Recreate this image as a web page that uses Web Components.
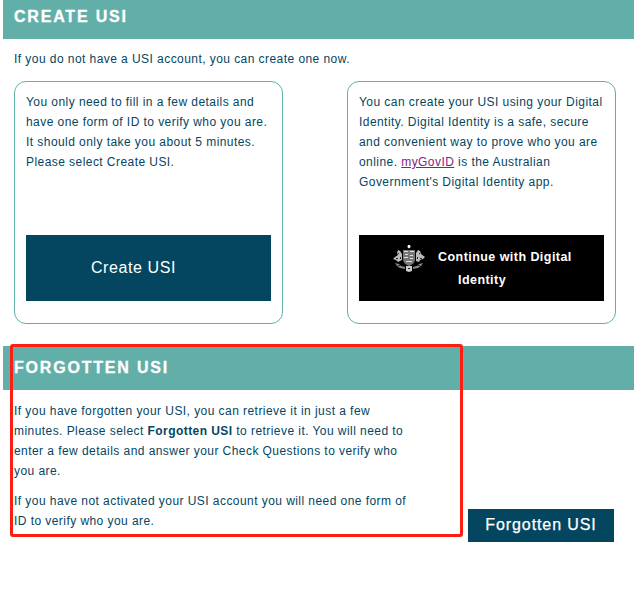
<!DOCTYPE html>
<html>
<head>
<meta charset="utf-8">
<title>USI</title>
<style>
  html, body { margin: 0; background: #fff; }
  body { font: 12px/20px "Liberation Sans", Arial, sans-serif; color: #04465f; letter-spacing: .44px; }
  a { color: #85207f; }
</style>
</head>
<body>
<usi-page>
  <usi-section heading="CREATE USI" bar="39">
    <usi-intro>If you do not have a USI account, you can create one now.</usi-intro>
    <usi-cards>
      <usi-card>
        You only need to fill in a few details and have one form of ID to verify who you are. It should only take you about 5 minutes. Please select Create USI.
        <usi-button slot="action" class="wide">Create USI</usi-button>
      </usi-card>
      <usi-card>
        You can create your USI using your Digital Identity. Digital Identity is a safe, secure and convenient way to prove who you are online. <a href="#">myGovID</a> is the Australian Government's Digital Identity app.
        <usi-digital-button slot="action"></usi-digital-button>
      </usi-card>
    </usi-cards>
  </usi-section>
  <usi-section heading="FORGOTTEN USI" bar="44">
    <usi-forgotten>
      <p>If you have forgotten your USI, you can retrieve it in just a few minutes. Please select <b>Forgotten USI</b> to retrieve it. You will need to enter a few details and answer your Check Questions to verify who you are.</p>
      <p>If you have not activated your USI account you will need one form of ID to verify who you are.</p>
    </usi-forgotten>
  </usi-section>
  <usi-highlight></usi-highlight>
</usi-page>

<script>
function shadow(el, html) {
  el.attachShadow({ mode: "open" }).innerHTML = html;
}

class UsiPage extends HTMLElement {
  constructor() {
    super();
    shadow(this, `
      <style>
        :host { display: block; position: relative; padding-left: 3px; min-height: 589px; box-sizing: border-box; }
      </style>
      <slot></slot>`);
  }
}

class UsiSection extends HTMLElement {
  constructor() {
    super();
    const bar = +this.getAttribute("bar");
    // first bar is cut off by the top of the page, so its text sits higher
    const lh = bar > 40 ? bar : bar - 5;
    shadow(this, `
      <style>
        :host { display: block; }
        h2 {
          margin: 0;
          height: ${bar}px;
          padding-left: 11px;
          background: #62afaa;
          color: #fff;
          font: bold 16px/${lh}px "Liberation Sans", Arial, sans-serif;
          letter-spacing: 1.8px;
          -webkit-text-stroke: .3px #fff;
        }
      </style>
      <h2>${this.getAttribute("heading")}</h2>
      <slot></slot>`);
  }
}

class UsiIntro extends HTMLElement {
  constructor() {
    super();
    shadow(this, `
      <style>
        :host { display: block; padding: 10px 0 12px 11px; }
      </style>
      <slot></slot>`);
  }
}

class UsiCards extends HTMLElement {
  constructor() {
    super();
    shadow(this, `
      <style>
        :host { display: flex; gap: 64px; padding: 0 0 22px 11px; }
      </style>
      <slot></slot>`);
  }
}

class UsiCard extends HTMLElement {
  constructor() {
    super();
    shadow(this, `
      <style>
        :host {
          display: flex;
          flex-direction: column;
          box-sizing: border-box;
          width: 269px;
          height: 243px;
          padding: 10px 11px 22px 11px;
          border: 1px solid #62afaa;
          border-radius: 12px;
        }
        .text { flex: 1; }
      </style>
      <div class="text"><slot></slot></div>
      <slot name="action"></slot>`);
  }
}

class UsiButton extends HTMLElement {
  constructor() {
    super();
    const wide = this.classList.contains("wide");
    shadow(this, `
      <style>
        :host {
          display: flex;
          align-items: center;
          justify-content: center;
          box-sizing: border-box;
          background: #04465f;
          color: #fff;
          font-size: 16px;
          letter-spacing: ${wide ? .6 : .9}px;
          width: ${wide ? 245 : 146}px;
          height: ${wide ? 66 : 33}px;
          ${wide ? "padding-right: 30px;" : "padding-bottom: 2px; -webkit-text-stroke: .25px #fff;"}
        }
      </style>
      <slot></slot>`);
  }
}

class UsiDigitalButton extends HTMLElement {
  constructor() {
    super();
    shadow(this, `
      <style>
        :host {
          display: flex;
          box-sizing: border-box;
          width: 245px;
          height: 66px;
          background: #000;
          color: #fff;
          font: bold 12.5px/23px "Liberation Sans", Arial, sans-serif;
          letter-spacing: .45px;
        }
        svg { width: 34px; height: 28px; margin: 10px 12px 0 33px; flex: none; }
        .label { padding-top: 11px; white-space: nowrap; }
        .label span { display: block; padding-left: 20px; }
      </style>
      <svg viewBox="0 0 34 28" aria-hidden="true">
        <path d="M16 0h2l.6 2-1.600 1.400L15.400 2z" fill="#fff"/>
        <path d="M11 5h12v9q0 5-6 7-6-2-6-7z" fill="#777"/>
        <path d="M12 6h4v1h-4zM18 6h4v1h-4zM13 9h3v1h-3zM18 10h3v1h-3zM12 12h4v1h-4zM18 13h3v1h-3zM14 16h6v1h-6z" fill="#ddd"/>
        <path d="M10 9 8 6 6 5 5 8l1 2-3 2-2 2 3 1 2 2 4-2z" fill="#bbb"/>
        <path d="M24 8l2-3 2 1 1 3 4 3-2 2-3 1-1 2-3-1z" fill="#bbb"/>
        <path d="M3 18l4 1 2 2 4 1v2l-5-1-3-2zM31 18l-4 1-2 2-4 1v2l5-1 3-2z" fill="#888"/>
        <path d="M14 21h6v5l-3 1-3-1z" fill="#ccc"/>
        <path d="M6 8h1v1H6zM4 13h2v1H4zM8 12h1v2H8zM27 8h1v1h-1zM28 13h2v1h-2zM25 12h1v2h-1zM6 20h2v1H6zM26 20h2v1h-2zM16 23h2v1h-2z" fill="#222"/>
      </svg>
      <div class="label">Continue with Digital<span>Identity</span></div>`);
  }
}

class UsiForgotten extends HTMLElement {
  constructor() {
    super();
    shadow(this, `
      <style>
        :host { display: flex; justify-content: space-between; align-items: flex-end; padding: 11px 20px 0 11px; }
        .text { width: 398px; }
        ::slotted(p) { margin: 0 0 10px; }
        ::slotted(p:last-child) { margin-bottom: 0; }
        usi-button { margin-bottom: -11px; }
      </style>
      <div class="text"><slot></slot></div>
      <usi-button>Forgotten USI</usi-button>`);
  }
}

/* red annotation rectangle drawn over the section */
class UsiHighlight extends HTMLElement {
  constructor() {
    super();
    shadow(this, `
      <style>
        :host {
          position: absolute;
          left: 10px;
          top: 344px;
          width: 453px;
          height: 193px;
          box-sizing: border-box;
          border: 3px solid #fb1e12;
          border-radius: 3px;
          pointer-events: none;
        }
      </style>`);
  }
}

customElements.define("usi-page", UsiPage);
customElements.define("usi-section", UsiSection);
customElements.define("usi-intro", UsiIntro);
customElements.define("usi-cards", UsiCards);
customElements.define("usi-card", UsiCard);
customElements.define("usi-button", UsiButton);
customElements.define("usi-digital-button", UsiDigitalButton);
customElements.define("usi-forgotten", UsiForgotten);
customElements.define("usi-highlight", UsiHighlight);
</script>
</body>
</html>
